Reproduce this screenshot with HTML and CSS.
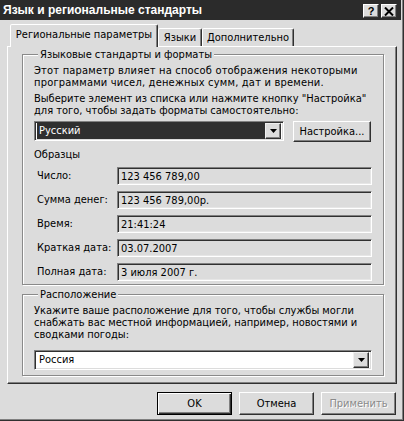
FILE: index.html
```html
<!DOCTYPE html>
<html lang="ru">
<head>
<meta charset="utf-8">
<title>Язык и региональные стандарты</title>
<link rel="stylesheet" href="styles.css">
</head>
<body>
<div class="window">
  <div class="titlebar">
    <span class="title">Язык и региональные стандарты</span>
    <div class="tbtns">
      <span class="tbtn help">?</span>
      <span class="tbtn close"><svg width="10" height="9" viewBox="0 0 10 9"><path d="M1 0.5 L9 8.5 M9 0.5 L1 8.5" stroke="#000" stroke-width="2" fill="none"/></svg></span>
    </div>
  </div>
  <div class="content">
    <div class="tabs">
      <div class="tab active t1">Региональные параметры</div>
      <div class="tab t2">Языки</div>
      <div class="tab t3">Дополнительно</div>
    </div>
    <div class="panel">
      <fieldset class="group g1">
        <legend>Языковые стандарты и форматы</legend>
        <p class="para p1">Этот параметр влияет на способ отображения некоторыми<br>программами чисел, денежных сумм, дат и времени.</p>
        <p class="para p2">Выберите элемент из списка или нажмите кнопку "Настройка"<br>для того, чтобы задать форматы самостоятельно:</p>
        <div class="combo-row">
          <div class="combo selected">
            <span class="combo-val">Русский</span>
            <span class="arrow"><svg width="7" height="4" viewBox="0 0 7 4"><polygon points="0,0 7,0 3.5,4" fill="#000"/></svg></span>
          </div>
          <span class="btn setup">Настройка...</span>
        </div>
        <div class="samples-title">Образцы</div>
        <div class="samples">
          <div class="sample"><span class="lbl">Число:</span><span class="field">123 456 789,00</span></div>
          <div class="sample"><span class="lbl">Сумма денег:</span><span class="field">123 456 789,00р.</span></div>
          <div class="sample"><span class="lbl">Время:</span><span class="field">21:41:24</span></div>
          <div class="sample"><span class="lbl">Краткая дата:</span><span class="field">03.07.2007</span></div>
          <div class="sample"><span class="lbl">Полная дата:</span><span class="field">3 июля 2007 г.</span></div>
        </div>
      </fieldset>
      <fieldset class="group g2">
        <legend>Расположение</legend>
        <p class="para">Укажите ваше расположение для того, чтобы службы могли<br>снабжать вас местной информацией, например, новостями и<br>сводками погоды:</p>
        <div class="combo wide">
          <span class="combo-val">Россия</span>
          <span class="arrow"><svg width="7" height="4" viewBox="0 0 7 4"><polygon points="0,0 7,0 3.5,4" fill="#000"/></svg></span>
        </div>
      </fieldset>
    </div>
    <div class="buttons">
      <span class="btn dlg default">OK</span>
      <span class="btn dlg">Отмена</span>
      <span class="btn dlg disabled">Применить</span>
    </div>
  </div>
</div>
</body>
</html>
```
FILE: styles.css
```css
* { box-sizing: border-box; }
html, body { margin: 0; padding: 0; }
body {
  width: 404px;
  height: 421px;
  overflow: hidden;
  background: #dcdcdc;
  font-family: "DejaVu Sans Condensed", "DejaVu Sans", sans-serif;
  font-stretch: condensed;
  font-size: 11px;
  color: #000;
}
.window {
  width: 404px;
  height: 421px;
  background: #dcdcdc;
  border-right: 1px solid #303030;
  border-bottom: 1px solid #303030;
  box-shadow: inset -1px -1px 0 #808080;
  display: flex;
  flex-direction: column;
}
.titlebar {
  height: 20px;
  margin-right: 2px;
  background: #2b2b2b;
  display: flex;
  align-items: center;
  justify-content: space-between;
  padding: 0 4px 0 3px;
}
.title {
  color: #fff;
  font-family: "Liberation Sans", Arial, sans-serif;
  font-stretch: normal;
  font-weight: bold;
  font-size: 12px;
}
.tbtns { display: flex; gap: 2px; margin-top: 2px; }
.tbtn {
  width: 16px;
  height: 14px;
  background: #dcdcdc;
  border: 1px solid;
  border-color: #fff #303030 #303030 #fff;
  box-shadow: inset -1px -1px 0 #808080;
  display: flex;
  align-items: center;
  justify-content: center;
  font-family: "Liberation Sans", Arial, sans-serif;
  font-weight: bold;
  font-size: 11px;
  line-height: 1;
}
.content {
  flex: 1;
  display: flex;
  flex-direction: column;
  padding: 4px 6px 0 7px;
}
.tabs {
  display: flex;
  align-items: flex-end;
  height: 22px;
  padding-left: 3px;
  position: relative;
  z-index: 2;
}
.tab {
  height: 18px;
  border: 1px solid;
  border-bottom: none;
  border-color: #fff #303030 transparent #fff;
  box-shadow: inset -1px 0 0 #808080;
  border-radius: 2px 2px 0 0;
  background: #dcdcdc;
  display: flex;
  align-items: center;
  justify-content: center;
  padding-bottom: 1px;
}
.tab.active {
  height: 23px;
  margin-bottom: -1px;
  padding-bottom: 3px;
}
.t1 { width: 148px; }
.t2 { width: 44px; }
.t3 { width: 92px; }
.panel {
  height: 338px;
  border: 1px solid;
  border-color: #fff #303030 #303030 #fff;
  box-shadow: inset -1px -1px 0 #808080;
  display: flex;
  flex-direction: column;
}
.group {
  margin: 0;
  border: 1px solid #8a8a8a;
  box-shadow: 1px 1px 0 #fff, inset 1px 1px 0 #fff;
  min-width: 0;
}
.group legend {
  padding: 0 2px;
  margin-left: 4px;
  line-height: 13px;
  background: #dcdcdc;
}
.g1 {
  margin: 1px 12px 0 14px;
  padding: 4px 10px 3px 11px;
}
.g2 {
  margin: 3px 12px 0 14px;
  padding: 4px 10px 5px 11px;
}
.para {
  margin: 0;
  line-height: 12px;
  white-space: nowrap;
}
.p1 { letter-spacing: 0.2px; }
.p2 { margin-top: 4px; }
.combo-row {
  display: flex;
  gap: 9px;
  margin-top: 4px;
  align-items: flex-start;
}
.combo {
  height: 20px;
  border: 1px solid;
  border-color: #808080 #fff #fff #808080;
  box-shadow: inset 1px 1px 0 #303030, inset -1px -1px 0 #dcdcdc;
  background: #fff;
  display: flex;
  align-items: center;
  padding: 2px;
}
.combo.selected { width: 250px; }
.combo.wide { width: 338px; margin-top: 9px; }
.combo-val {
  flex: 1;
  height: 16px;
  line-height: 16px;
  padding-left: 2px;
}
.combo.selected .combo-val {
  background: #2f2f2f;
  color: #fff;
}
.arrow {
  width: 16px;
  height: 16px;
  background: #dcdcdc;
  border: 1px solid;
  border-color: #f0f0f0 #303030 #303030 #f0f0f0;
  box-shadow: inset -1px -1px 0 #808080;
  display: flex;
  align-items: center;
  justify-content: center;
}
.btn {
  display: flex;
  align-items: center;
  justify-content: center;
  background: #dcdcdc;
  border: 1px solid;
  border-color: #fff #303030 #303030 #fff;
  box-shadow: inset -1px -1px 0 #808080;
}
.setup { width: 78px; height: 21px; }
.samples-title {
  margin-top: 6px;
  line-height: 13px;
}
.samples {
  display: flex;
  flex-direction: column;
  gap: 6px;
  margin-top: 6px;
}
.sample {
  display: flex;
  align-items: center;
  height: 18px;
}
.lbl {
  width: 83px;
  padding-left: 3px;
  margin-top: -2px;
}
.field {
  width: 255px;
  height: 18px;
  border: 1px solid;
  border-color: #808080 #fff #fff #808080;
  box-shadow: inset 1px 1px 0 #303030, inset -1px -1px 0 #e6e6e6;
  padding: 1px 3px 0 3px;
  line-height: 15px;
}
.buttons {
  display: flex;
  justify-content: flex-end;
  gap: 7px;
  margin-top: 8px;
  padding-right: 1px;
}
.dlg { width: 75px; height: 23px; }
.default {
  border: 1px solid #000;
  box-shadow: inset 1px 1px 0 #fff, inset -1px -1px 0 #303030, inset -2px -2px 0 #808080;
}
.disabled {
  color: #8a8a8a;
  text-shadow: 1px 1px 0 #fff;
}
```
